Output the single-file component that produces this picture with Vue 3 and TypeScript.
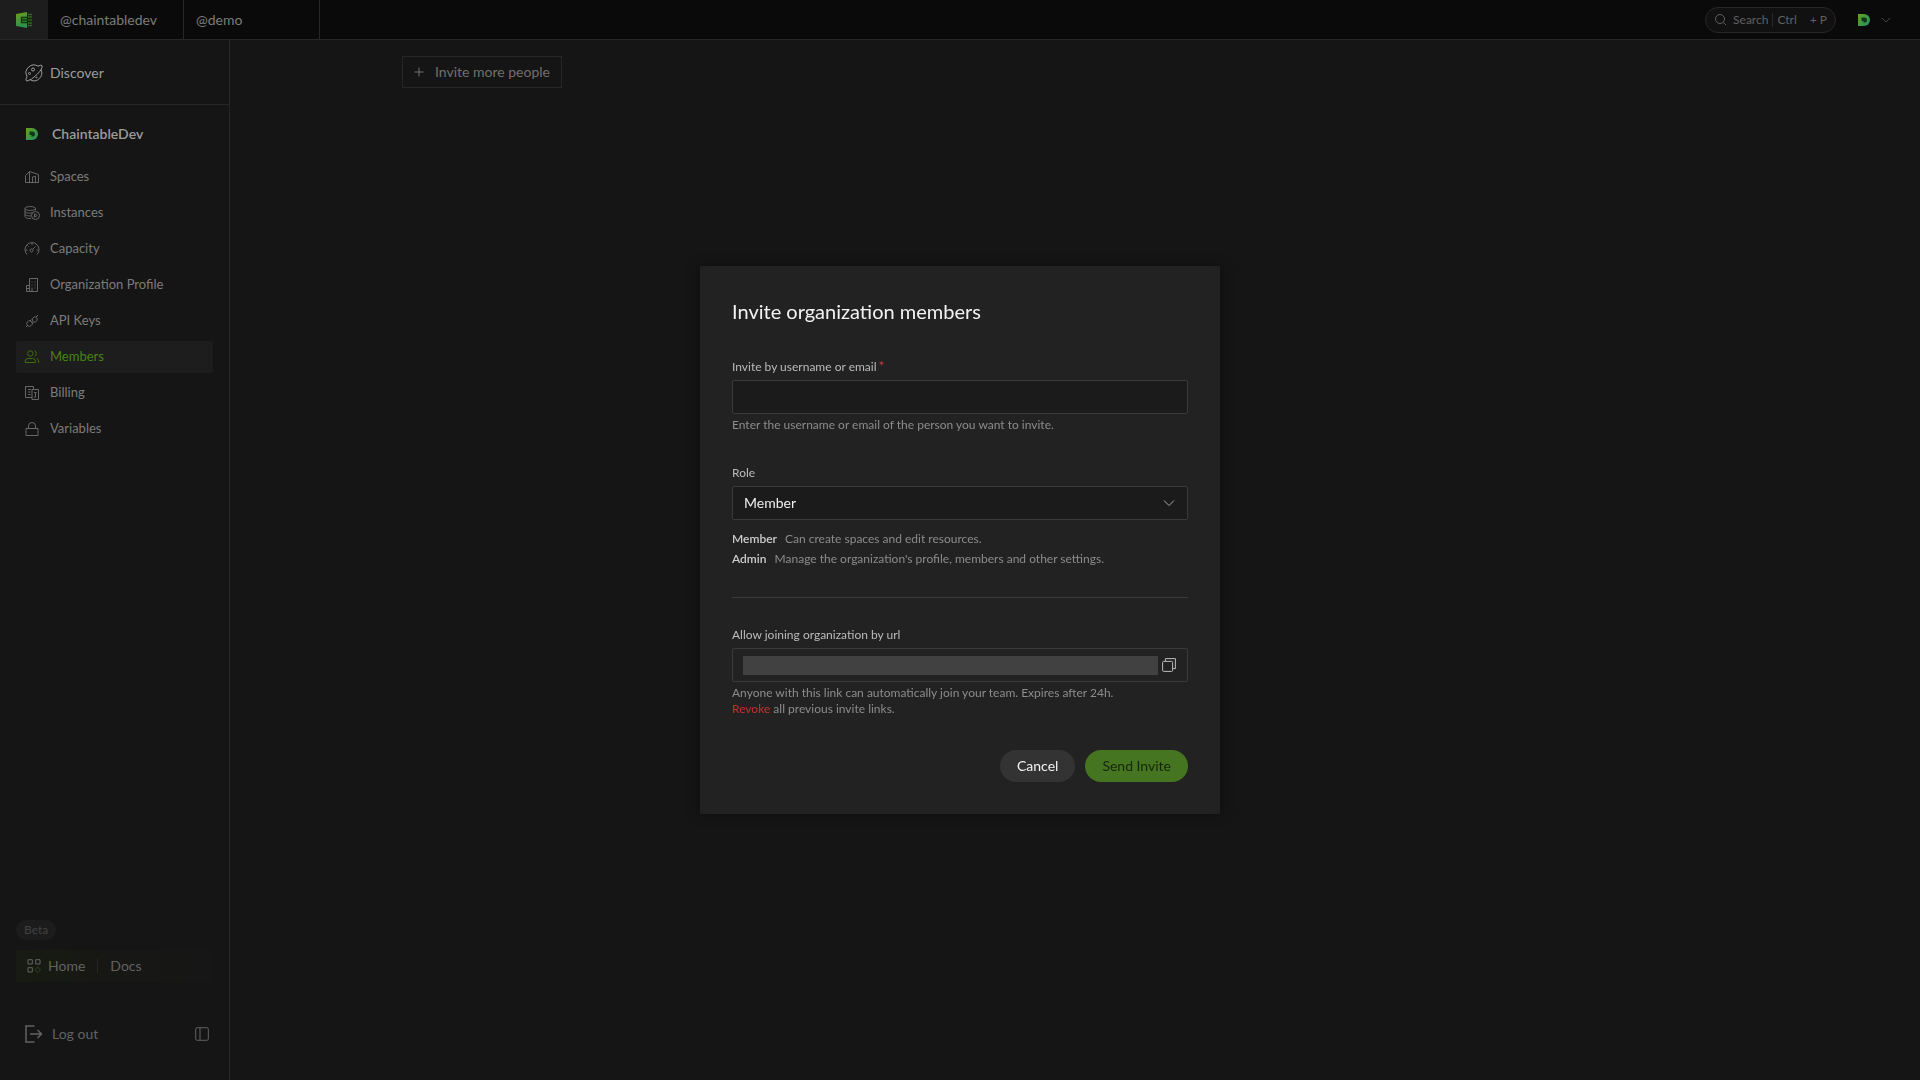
<script setup lang="ts">
import { ref } from 'vue'

interface NavItem {
  label: string
  icon: string[]
}

const tabs = ['@chaintabledev', '@demo']

const items: NavItem[] = [
  { label: 'Spaces', icon: ['M1.5 13.5V6.5L5.5 2.5L14.5 5.5V13.5Z', 'M5.5 2.5V13.5', 'M8.5 13.5V8L11.5 7.2V13.5'] },
  {
    label: 'Instances',
    icon: [
      'M1 3.5C1 .9 11.500 .9 11.500 3.500S1 6.100 1 3.500Z',
      'M1 3.500V11.500C1 13 4 13.800 7 13.500',
      'M11.500 3.500V5.500',
      'M1 6.200C1 8 5 8.500 8 8',
      'M1 9C1 10.500 4 11.200 7 10.900',
      'M15.500 10.500A4 4 0 1 1 7.500 10.500A4 4 0 1 1 15.500 10.500',
      'M10.500 8.800L13.200 10.500L10.500 12.200Z'
    ]
  },
  {
    label: 'Capacity',
    icon: ['M3 13.500A7 7 0 1 1 13 13.500', 'M11.500 5.500L8.500 8.500', 'M9 9.500A1.500 1.500 0 1 1 6 9.500A1.500 1.500 0 1 1 9 9.500', 'M8 2V4M1.500 9H3.500M12.500 9H14.500M3.500 4.500L4.500 5.500']
  },
  {
    label: 'Organization Profile',
    icon: ['M5.500 14.500V1.500H13.500V14.500Z', 'M5.500 8.500H2.500V14.500H5.500', 'M8 4.500V5.500M11 4.500V5.500M8 7.500V8.500M11 7.500V8.500M8 10.500V14M11 10.500V11.500M2.500 11.500H5']
  },
  {
    label: 'API Keys',
    icon: ['M14 2L12 4', 'M8.500 5.500L10 4A2.500 2.500 0 0 1 13 7.500L11.200 9.300Q7.500 9 8.500 5.500Z', 'M2 14L4 12', 'M4.800 7.500L3.500 8.800A2.500 2.500 0 0 0 7.200 12.500L8.500 11.200Q8.500 8 4.800 7.500Z', 'M6 8L7.500 6.500M8 10L9.500 8.500']
  },
  {
    label: 'Members',
    icon: ['M9 4.500A2.700 2.700 0 1 1 3.600 4.500A2.700 2.700 0 1 1 9 4.500', 'M1.200 13.500V12Q1.200 9.500 4 9.500H8.500Q11.300 9.500 11.300 12V13.500Z', 'M10.500 1.700A3 3 0 0 1 10.500 7.200', 'M12.500 9.300Q14.800 9.800 14.800 14']
  },
  {
    label: 'Billing',
    icon: ['M8 12.500H1.500V1.500H9.500V4', 'M8 14.500V4.500H14.500V14.500Z', 'M4 4.500H7M4 7H6.500M4 9.500H6.500M10 7.500H12.500M11.500 7.500V12M10 12H12']
  },
  { label: 'Variables', icon: ['M2 7.500H14V14.500H2Z', 'M4.500 7.500V5A3.500 3.500 0 0 1 11.500 5V7.500'] }
]

const active = ref('Members')
const invitee = ref('')
const role = ref('Member')
const inviteUrl = ref('')
</script>

<template>
  <div class="app">
    <header class="topbar">
      <a class="brand" href="#" aria-label="Chaintable">
        <svg width="16" height="16" viewBox="0 0 16 16">
          <defs>
            <linearGradient id="leaf" x1="0" y1="0" x2="0.300" y2="1">
              <stop offset="0" stop-color="#6f9c1c" />
              <stop offset="1" stop-color="#2b9150" />
            </linearGradient>
          </defs>
          <path fill="url(#leaf)" d="M0 2L11 0V16L0 14Z" />
          <path stroke="#427f28" stroke-width="1.500" stroke-dasharray="1.500 0.700" fill="none" d="M12 2.500H16M12 5H16M12 11H16M12 13.500H16" />
          <path stroke="#427f28" fill="none" d="M12 8H16" />
          <path stroke="#17300f" stroke-width="1.300" fill="none" d="M11 5.500H5.500V10.500H11M5.500 8H12" />
        </svg>
      </a>
      <nav class="tabs">
        <a v-for="tab in tabs" :key="tab" class="tab" href="#">{{ tab }}</a>
      </nav>
      <button class="search" type="button">
        <svg class="stroke" width="14" height="14" viewBox="0 0 14 14">
          <circle cx="6" cy="6" r="4.500" />
          <path d="M9.500 9.500L12 12" />
        </svg>
        <span class="search-word">Search</span>
        <span class="bar"></span>
        <span>Ctrl</span>
        <span class="key">+ P</span>
      </button>
      <button class="account" type="button" aria-label="Account">
        <svg width="12" height="12" viewBox="0 0 12 12">
          <defs>
            <linearGradient id="badge" x1="0" y1="0" x2="1" y2="1">
              <stop offset="0" stop-color="#64a020" />
              <stop offset="1" stop-color="#209068" />
            </linearGradient>
          </defs>
          <path fill="url(#badge)" d="M0 0H6A6 6 0 0 1 6 12H0Z" />
          <path fill="#10371c" d="M3.500 3.500H6.500A2.500 2.500 0 0 1 6.500 8.500L5.500 9V7H3.500Z" />
        </svg>
        <svg class="stroke" width="10" height="6" viewBox="0 0 10 6"><path d="M1 1L5 5L9 1" /></svg>
      </button>
    </header>

    <div class="body">
      <aside class="sidebar">
        <a class="discover" href="#">
          <svg class="stroke" width="18" height="18" viewBox="0 0 18 18">
            <path d="M2 12.500A7.800 7.800 0 0 1 13 2.200M15.900 5.500A7.800 7.800 0 0 1 5.500 16" />
            <path d="M2 12.500Q0 17 2 17Q6 16.500 12 10.500T17 1.500Q16.500 .500 13 2.200" />
            <circle cx="8" cy="5.500" r="1.500" />
            <circle cx="4.500" cy="9.500" r="1" />
            <circle cx="11.500" cy="13.500" r="0.500" />
          </svg>
          Discover
        </a>
        <div class="org">
          <svg width="12" height="12" viewBox="0 0 12 12">
            <path fill="url(#badge)" d="M0 0H6A6 6 0 0 1 6 12H0Z" />
            <path fill="#10371c" d="M3.500 3.500H6.500A2.500 2.500 0 0 1 6.500 8.500L5.500 9V7H3.500Z" />
          </svg>
          ChaintableDev
        </div>
        <nav class="menu">
          <a
            v-for="item in items"
            :key="item.label"
            class="menu-item"
            :class="{ active: item.label === active }"
            href="#"
            @click.prevent="active = item.label"
          >
            <svg class="stroke" width="16" height="16" viewBox="0 0 16 16">
              <path v-for="(d, i) in item.icon" :key="i" :d="d" />
            </svg>
            <span>{{ item.label }}</span>
          </a>
        </nav>

        <div class="foot">
          <span class="beta">Beta</span>
          <div class="links">
            <svg class="stroke" width="14" height="14" viewBox="0 0 14 14">
              <path d="M1 .700H5.300V5H1ZM8.700 .700H13V5H8.700ZM1 8.700H5.300V13H1Z" />
              <path class="gem" d="M10.800 8L13.500 10.800L10.800 13.500L8 10.800Z" />
            </svg>
            <a href="#">Home</a>
            <span class="bar"></span>
            <a href="#">Docs</a>
          </div>
          <div class="exit">
            <a class="logout" href="#">
              <svg class="stroke" width="18" height="18" viewBox="0 0 18 18">
                <path stroke-width="1.500" d="M9.500 1H1V17H9.500M5 9H16.500M12.500 5L16.500 9L12.500 13" />
              </svg>
              Log out
            </a>
            <button class="collapse" type="button" aria-label="Collapse sidebar">
              <svg class="stroke" width="14" height="14" viewBox="0 0 14 14">
                <rect x="0.700" y="0.700" width="12.600" height="12.600" rx="1.500" />
                <path d="M5 1V13" />
              </svg>
            </button>
          </div>
        </div>
      </aside>

      <main class="content">
        <button class="invite-more" type="button">
          <svg class="stroke" width="10" height="10" viewBox="0 0 10 10"><path d="M5 .500V9.500M.500 5H9.500" /></svg>
          Invite more people
        </button>
      </main>
    </div>

    <div class="overlay">
      <form class="modal" role="dialog" aria-labelledby="title" @submit.prevent>
        <h1 id="title">Invite organization members</h1>

        <label for="invitee">Invite by username or email<span class="required">*</span></label>
        <input id="invitee" v-model="invitee" class="control" type="text" />
        <p class="hint">Enter the username or email of the person you want to invite.</p>

        <label class="next" for="role">Role</label>
        <div class="select">
          <select id="role" v-model="role" class="control">
            <option>Member</option>
            <option>Admin</option>
          </select>
          <svg class="stroke" width="12" height="8" viewBox="0 0 12 8"><path d="M1 1.500L6 6.500L11 1.500" /></svg>
        </div>
        <dl class="roles">
          <div><dt>Member</dt><dd>Can create spaces and edit resources.</dd></div>
          <div><dt>Admin</dt><dd>Manage the organization's profile, members and other settings.</dd></div>
        </dl>

        <hr />

        <label for="url">Allow joining organization by url</label>
        <div class="control url">
          <input id="url" v-model="inviteUrl" type="text" readonly />
          <button type="button" aria-label="Copy link">
            <svg class="stroke" width="14" height="14" viewBox="0 0 14 14">
              <rect x="0.600" y="3.400" width="10" height="10" rx="1" />
              <path d="M3.400 3V.600H13.400V10.600H11" />
            </svg>
          </button>
        </div>
        <p class="hint">
          Anyone with this link can automatically join your team. Expires after 24h.<br />
          <a href="#">Revoke</a> all previous invite links.
        </p>

        <div class="actions">
          <button class="cancel" type="button">Cancel</button>
          <button class="send" type="submit">Send Invite</button>
        </div>
      </form>
    </div>
  </div>
</template>

<style>
body {
  background: #151515;
}
</style>

<style scoped>
.app,
.app * {
  box-sizing: border-box;
}
.app {
  display: flex;
  flex-direction: column;
  min-height: 100vh;
  background: #151515;
  color: #7c7c7c;
  font: 14px/20px Lato, sans-serif;
}
a {
  color: inherit;
  text-decoration: none;
}
button {
  padding: 0;
  border: 0;
  background: none;
  color: inherit;
  font: inherit;
}
svg {
  flex: none;
}
.stroke {
  fill: none;
  stroke: currentColor;
}
.topbar {
  display: flex;
  align-items: center;
  height: 40px;
  border-bottom: 1px solid #272727;
  background: #0a0a0a;
}
.brand {
  display: flex;
  align-items: center;
  justify-content: center;
  width: 48px;
  height: 100%;
  background: #1d1d1d;
}
.tabs {
  display: flex;
  flex: 1;
  height: 100%;
}
.tab {
  display: flex;
  align-items: center;
  width: 136px;
  padding-left: 12px;
  border-right: 1px solid #272727;
  font-size: 13px;
}
.search {
  display: flex;
  align-items: center;
  height: 26px;
  padding: 0 8px;
  border: 1px solid #272727;
  border-radius: 13px;
  background: #111;
  color: #606060;
  font-size: 12px;
}
.search-word {
  margin-left: 5px;
}
.bar {
  width: 1px;
  height: 14px;
  margin: 0 4px;
  background: #272727;
}
.key {
  margin-left: 13px;
}
.account {
  display: flex;
  align-items: center;
  gap: 11px;
  margin: 0 29px 0 22px;
  color: #444;
}
.tab {
  font-size: 14px;
}
.body {
  display: flex;
  flex: 1;
}
.sidebar {
  display: flex;
  flex-direction: column;
  width: 230px;
  border-right: 1px solid #272727;
}
.discover {
  display: flex;
  align-items: center;
  gap: 7px;
  height: 65px;
  padding: 2px 0 0 25px;
  border-bottom: 1px solid #272727;
  color: #9c9c9c;
}
.org {
  display: flex;
  align-items: center;
  gap: 14px;
  height: 56px;
  padding: 2px 0 0 26px;
  color: #9c9c9c;
  font-weight: 600;
}
.menu {
  display: flex;
  flex-direction: column;
  gap: 4px;
  padding: 0 16px;
  font-size: 13px;
}
.menu-item {
  display: flex;
  align-items: center;
  gap: 10px;
  height: 32px;
  padding-left: 8px;
  border-radius: 2px;
}
.menu-item svg {
  opacity: 0.8;
}
.menu-item span {
  padding-bottom: 3px;
}
.active {
  background: #1d1d1d;
  color: #47830f;
}
.foot {
  display: flex;
  flex-direction: column;
  align-items: flex-start;
  margin-top: auto;
  padding: 0 16px 30px;
}
.beta {
  padding: 0 8px;
  border-radius: 10px;
  background: #1c1c1c;
  color: #424242;
  font-size: 12px;
}
.links {
  display: flex;
  align-items: center;
  align-self: stretch;
  height: 32px;
  margin-top: 10px;
  padding-left: 11px;
  background: linear-gradient(90deg, #171b12, #171715 50%, #161616);
  color: #626262;
}
.links svg {
  margin-right: 7px;
}
.links .bar {
  margin: 0 12px;
}
.gem {
  stroke: #2f4719;
}
.exit {
  display: flex;
  align-items: center;
  justify-content: space-between;
  align-self: stretch;
  height: 32px;
  margin-top: 36px;
  padding: 0 4px 0 9px;
}
.logout {
  display: flex;
  align-items: center;
  gap: 9px;
}
.logout,
.collapse {
  color: #626262;
}
.collapse {
  display: flex;
}
.content {
  flex: 1;
  padding: 16px 172px;
}
.invite-more {
  display: flex;
  align-items: center;
  gap: 11px;
  height: 32px;
  padding: 0 11px;
  border: 1px solid #272727;
  color: #707070;
}
.overlay {
  position: fixed;
  inset: 0;
  display: flex;
  align-items: center;
  justify-content: center;
}
.modal {
  display: flex;
  flex-direction: column;
  width: 520px;
  padding: 32px;
  background: #222;
  box-shadow: 0 0 12px rgba(0, 0, 0, 0.4);
  color: #8c8c8c;
  font-size: 12px;
  line-height: 16px;
}
h1 {
  margin: 0 0 35px;
  color: #f2f2f2;
  font-size: 20px;
  font-weight: 400;
  line-height: 26px;
}
label {
  margin-bottom: 5px;
  color: #bbb;
}
.next {
  margin-top: 32px;
}
.required {
  margin-left: 2px;
  color: #d0364a;
  font-size: 14px;
  line-height: 12px;
}
.control {
  width: 100%;
  height: 34px;
  margin: 0;
  padding: 0 11px;
  border: 1px solid #3a3a3a;
  border-radius: 2px;
  outline: 0;
  background: #1b1b1b;
  color: #eee;
  font: 14px/20px Lato, sans-serif;
}
.select {
  position: relative;
}
.select select {
  appearance: none;
}
.select svg {
  position: absolute;
  top: 13px;
  right: 13px;
  color: #aaa;
}
.hint {
  margin: 3px 0 0;
}
.hint a {
  color: #c92f2f;
}
.roles {
  display: flex;
  flex-direction: column;
  gap: 4px;
  margin: 11px 0 30px;
}
.roles div {
  display: flex;
  gap: 8px;
}
dt {
  color: #ccc;
  font-weight: 600;
}
dd {
  margin: 0;
}
hr {
  width: 100%;
  height: 1px;
  margin: 0 0 29px;
  border: 0;
  background: #3a3a3a;
}
.url {
  display: flex;
  align-items: center;
  gap: 4px;
  padding: 0 11px 0 10px;
  background: none;
}
.url input {
  flex: 1;
  height: 19px;
  padding: 0;
  border: 0;
  outline: 0;
  background: #414141;
}
.url button {
  display: flex;
  color: #bbb;
}
.actions {
  display: flex;
  justify-content: flex-end;
  gap: 10px;
  margin-top: 33px;
  font-size: 14px;
}
.actions button {
  height: 32px;
  padding: 0 17px;
  border-radius: 16px;
}
.cancel {
  background: #333;
  color: #f2f2f2;
}
.send {
  background: #457520;
  color: #16260a;
}
</style>
